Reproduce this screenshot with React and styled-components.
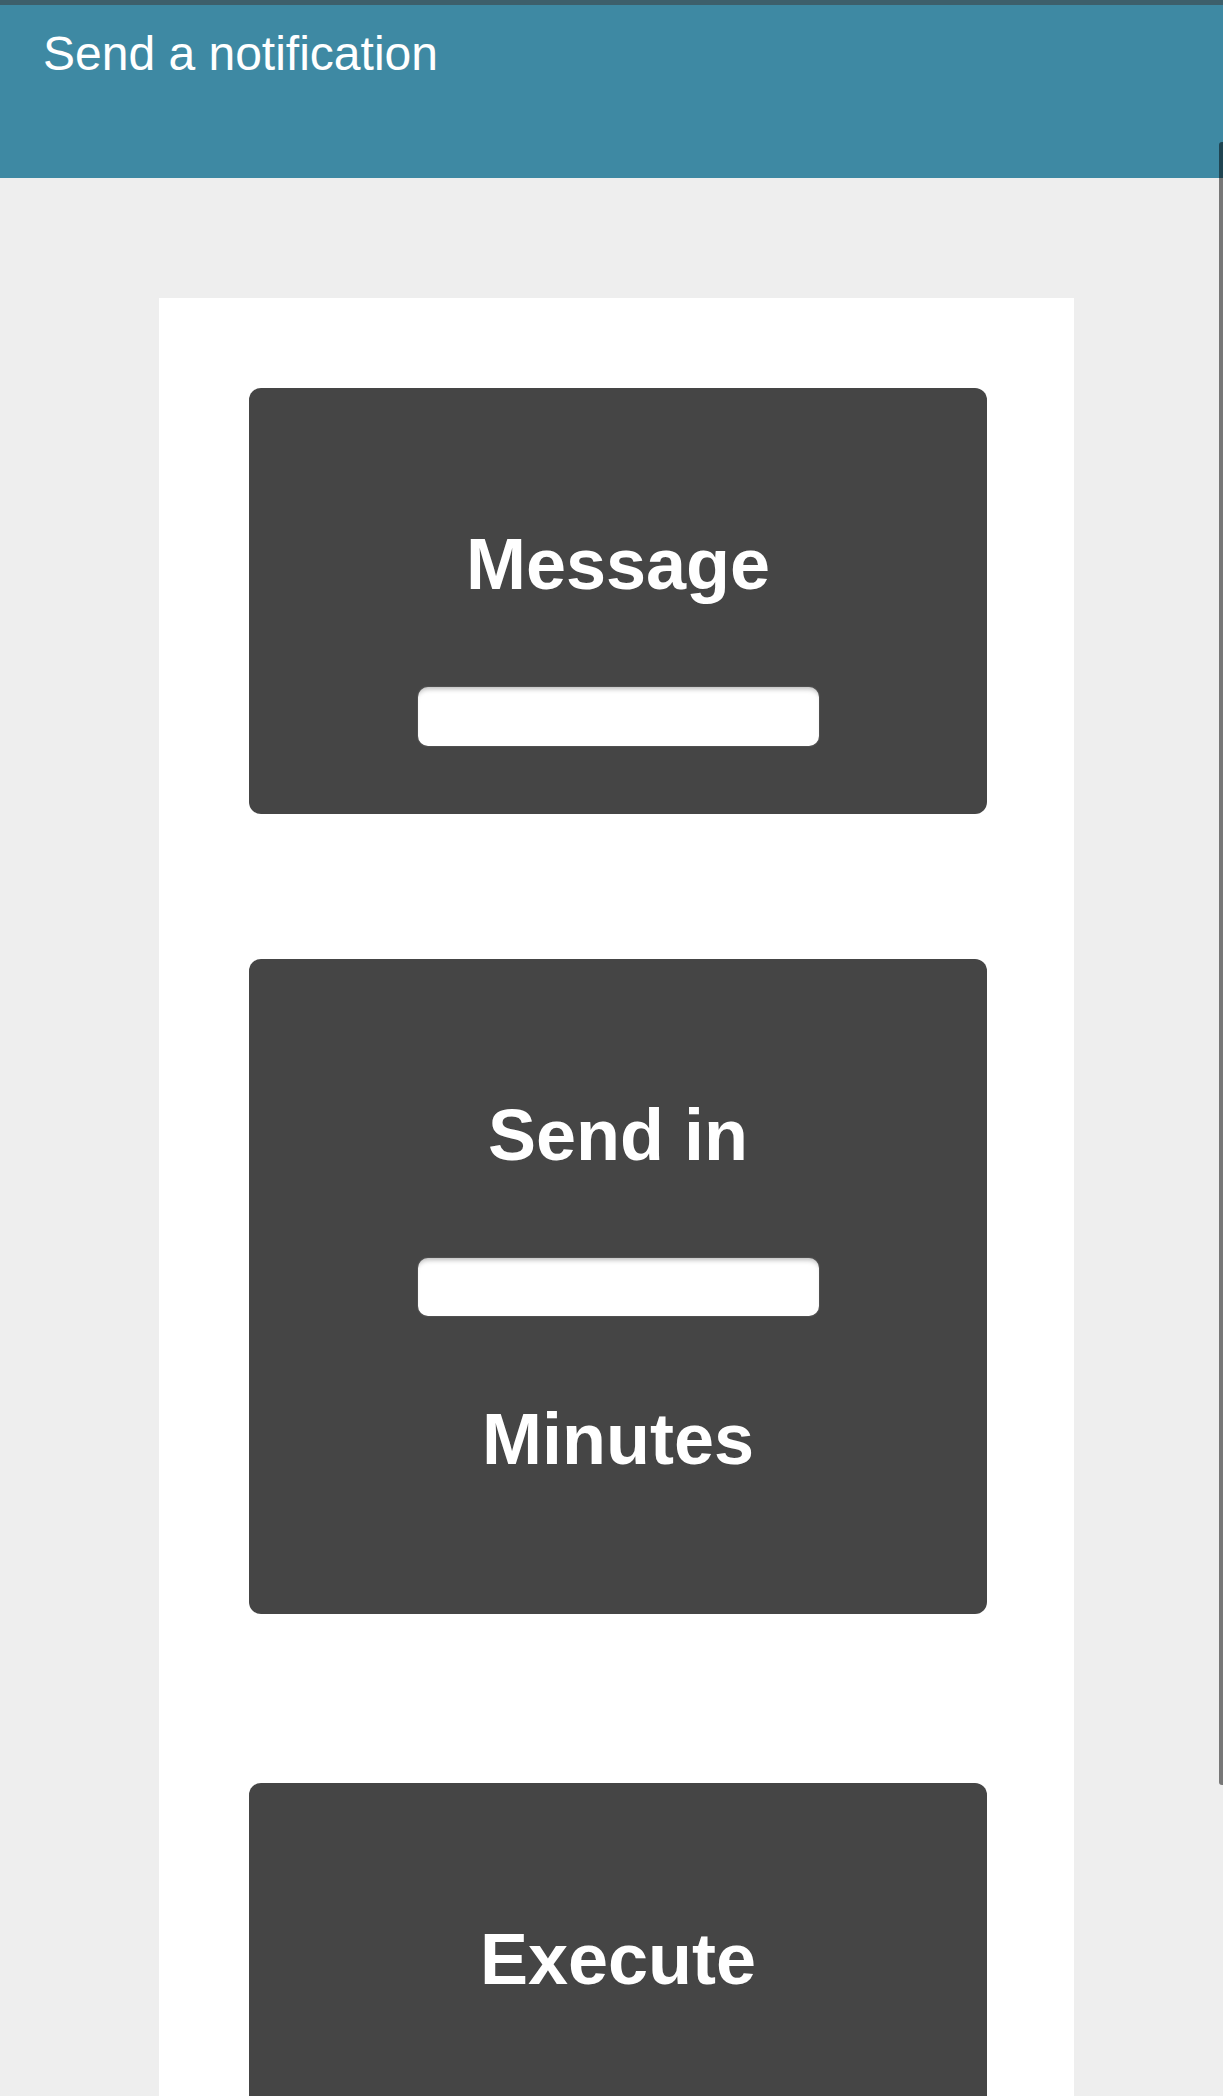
import React from 'react';
import styled, { createGlobalStyle } from 'styled-components';

const GlobalStyle = createGlobalStyle`
  html, body {
    margin: 0;
    padding: 0;
    height: 100%;
    overflow: hidden;
    background: #eeeeee;
  }
  * {
    box-sizing: border-box;
  }
`;

const Page = styled.div`
  height: 100vh;
  overflow: hidden;
  background: #eeeeee;
  font-family: 'Liberation Sans', Arial, Helvetica, sans-serif;
`;

const Header = styled.header`
  height: 178px;
  background: #3e89a3;
  border-top: 5px solid #3d5f6b;
  padding: 21px 0 0 43px;
`;

const HeaderTitle = styled.div`
  color: #ffffff;
  font-size: 48px;
  line-height: 56px;
  font-weight: 400;
`;

const Panel = styled.main`
  width: 915px;
  min-height: 1918px;
  margin: 120px 0 0 159px;
  padding: 90px 0 0 90px;
  background: #ffffff;
  display: flex;
  flex-direction: column;
  gap: 145px;
`;

const Card = styled.section`
  width: 738px;
  background: #454545;
  border-radius: 12px;
  padding: 136px 0 ${({ $pb }) => $pb}px;
  margin-top: ${({ $mt }) => $mt || 0}px;
  display: flex;
  flex-direction: column;
  align-items: center;
`;

const CardTitle = styled.h1`
  margin: 0;
  color: #ffffff;
  font-size: 72px;
  line-height: 80px;
  font-weight: 700;
  text-align: center;
`;

const TextInput = styled.input`
  display: block;
  width: 401px;
  height: ${({ $h }) => $h || 58}px;
  margin: 83px 0;
  border: none;
  border-radius: 10px;
  background: #ffffff;
  outline: none;
  box-shadow: 0 0 1px 1px rgba(255, 255, 255, 0.07),
    inset 0 5px 5px -3px rgba(0, 0, 0, 0.28);
  font-family: inherit;
  font-size: 28px;
  padding: 0 14px;

  &:last-child {
    margin-bottom: 0;
  }
`;

const ScrollThumb = styled.div`
  position: fixed;
  top: 142px;
  right: 0;
  width: 4px;
  height: 1643px;
  background: rgba(0, 0, 0, 0.5);
  border-radius: 3px 0 0 3px;
`;

const App = () => {
  return (
    <>
      <GlobalStyle />
      <Page>
        <Header>
          <HeaderTitle>Send a notification</HeaderTitle>
        </Header>
        <Panel>
          <Card $pb={68}>
            <CardTitle>Message</CardTitle>
            <TextInput type="text" $h={59} />
          </Card>
          <Card $pb={135}>
            <CardTitle>Send in</CardTitle>
            <TextInput type="text" />
            <CardTitle>Minutes</CardTitle>
          </Card>
          <Card $pb={240} $mt={24}>
            <CardTitle>Execute</CardTitle>
          </Card>
        </Panel>
      </Page>
      <ScrollThumb />
    </>
  );
};

export default App;
